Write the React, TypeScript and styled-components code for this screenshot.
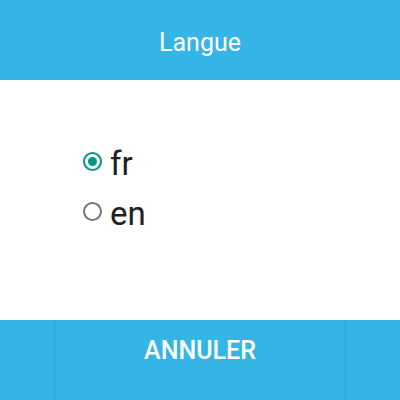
import React, { useState } from "react"
import styled, { createGlobalStyle } from "styled-components"

const GlobalStyle = createGlobalStyle`
  html, body {
    margin: 0;
    padding: 0;
    background: #ffffff;
  }
  body {
    font-family: Roboto, "Noto Sans", sans-serif;
  }
`

const Dialog = styled.div`
  display: flex;
  flex-direction: column;
  width: 400px;
  height: 400px;
  background: #ffffff;
`

const Header = styled.div`
  display: flex;
  align-items: center;
  justify-content: center;
  height: 80px;
  background: #35b5e5;
  color: #ffffff;
  font-size: 25px;
  padding-top: 4px;
  box-sizing: border-box;
`

const Body = styled.div`
  flex: 1;
  display: flex;
  flex-direction: column;
  padding: 58px 0 0 83px;
  box-sizing: border-box;
`

const Option = styled.label`
  display: flex;
  align-items: center;
  height: 50px;
  gap: 8px;
  font-size: 33px;
  color: #212121;
  cursor: pointer;
`

const Radio = styled.span<{ checked: boolean }>`
  position: relative;
  width: 19px;
  height: 19px;
  box-sizing: border-box;
  border-radius: 50%;
  border: 2px solid ${(p) => (p.checked ? "#009688" : "#757575")};
  flex: none;
  margin-top: -3px;

  &::after {
    content: "";
    position: absolute;
    inset: 3px;
    border-radius: 50%;
    background: ${(p) => (p.checked ? "#009688" : "transparent")};
  }
`

const Footer = styled.div`
  display: grid;
  grid-template-columns: 54px 1fr 54px;
  height: 80px;
  background: #35b5e5;
`

const Side = styled.div``

const CancelButton = styled.button`
  border: none;
  border-left: 1px solid #2ea3cf;
  border-right: 1px solid #2ea3cf;
  background: transparent;
  color: #ffffff;
  font-family: Roboto, "Noto Sans", sans-serif;
  font-size: 25px;
  font-weight: 500;
  padding: 0 0 20px;
  cursor: pointer;
`

const languages = ["fr", "en"]

export default function App() {
  const [lang, setLang] = useState("fr")
  return (
    <>
      <GlobalStyle />
      <Dialog>
        <Header>Langue</Header>
        <Body>
          {languages.map((l) => (
            <Option key={l} onClick={() => setLang(l)}>
              <Radio checked={lang === l} />
              {l}
            </Option>
          ))}
        </Body>
        <Footer>
          <Side />
          <CancelButton>ANNULER</CancelButton>
          <Side />
        </Footer>
      </Dialog>
    </>
  )
}
